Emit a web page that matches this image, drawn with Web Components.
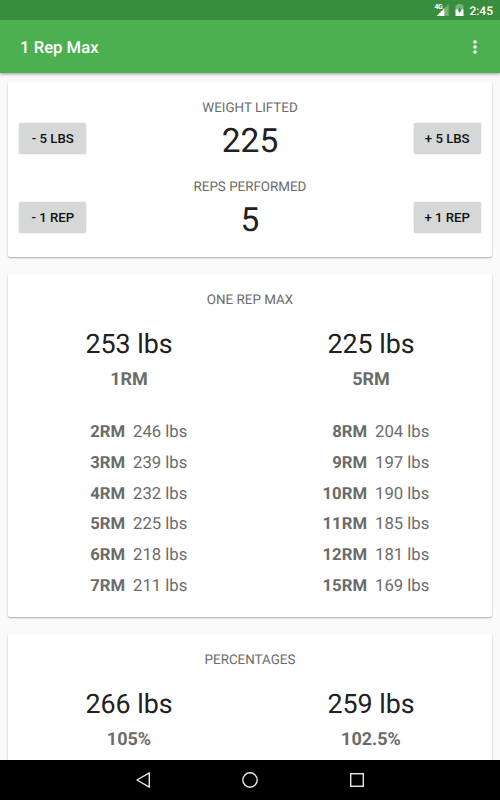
<!DOCTYPE html>
<html lang="en">
<head>
<meta charset="utf-8">
<title>1 Rep Max</title>
<style>
  html, body {
    margin: 0;
    height: 100%;
    overflow: hidden;
  }

  body {
    background: #fafafa;
    font-family: Roboto, "Liberation Sans", sans-serif;
    text-rendering: geometricPrecision;
  }
</style>
</head>
<body>
<rep-app>
  <rep-status-bar slot="top" time="2:45"></rep-status-bar>
  <rep-toolbar slot="top">1 Rep Max</rep-toolbar>
  <rep-card class="inputs">
    <rep-stepper label="WEIGHT LIFTED" minus="- 5 LBS" plus="+ 5 LBS">225</rep-stepper>
    <rep-stepper label="REPS PERFORMED" minus="- 1 REP" plus="+ 1 REP">5</rep-stepper>
  </rep-card>
  <rep-card heading="ONE REP MAX">
    <rep-results
      left="253 lbs|1RM;2RM|246 lbs;3RM|239 lbs;4RM|232 lbs;5RM|225 lbs;6RM|218 lbs;7RM|211 lbs"
      right="225 lbs|5RM;8RM|204 lbs;9RM|197 lbs;10RM|190 lbs;11RM|185 lbs;12RM|181 lbs;15RM|169 lbs"
    ></rep-results>
  </rep-card>
  <rep-card heading="PERCENTAGES">
    <rep-results left="266 lbs|105%" right="259 lbs|102.5%"></rep-results>
  </rep-card>
  <rep-nav-bar slot="bottom"></rep-nav-bar>
</rep-app>

<script>
class RepApp extends HTMLElement {
  constructor() {
    super()
    this.attachShadow({ mode: 'open' }).innerHTML = `
      <style>
        :host {
          display: flex;
          flex-direction: column;
          width: 100%;
          height: 100vh;
        }

        header {
          flex: none;
          box-shadow: 0 1px 3px rgba(0, 0, 0, 0.4);
          z-index: 1;
        }

        main {
          flex: 1;
          min-height: 0;
          overflow: hidden;
          display: flex;
          flex-direction: column;
          gap: 17px;
          padding: 9px 8px 0;
        }
      </style>
      <header><slot name="top"></slot></header>
      <main><slot></slot></main>
      <slot name="bottom"></slot>
    `
  }
}

class RepStatusBar extends HTMLElement {
  connectedCallback() {
    this.attachShadow({ mode: 'open' }).innerHTML = `
      <style>
        :host {
          display: flex;
          justify-content: flex-end;
          height: 20px;
          box-sizing: border-box;
          padding-right: 7px;
          background: #388e3c;
          color: #fff;
        }

        svg {
          display: block;
          margin-right: 5px;
        }

        .signal {
          margin-right: 6px;
        }

        .network {
          font-size: 7px;
          font-weight: 700;
          line-height: 15px;
          letter-spacing: -0.5px;
          margin-right: -6px;
          z-index: 1;
        }

        .time {
          font-size: 12px;
          font-weight: 500;
          line-height: 22px;
        }
      </style>
      <span class="network">4G</span>
      <svg class="signal" width="13" height="20" viewBox="0 0 13 20">
        <path d="M12.7 4v12H0.7z" fill="#fff" opacity="0.3"/>
        <path d="M8.4 8.3V16H0.7z" fill="#fff"/>
      </svg>
      <svg width="9" height="20" viewBox="0 0 9 20">
        <path d="M0.5 5.2h2V4h4v1.2h2V10h-8z" fill="#fff" opacity="0.35"/>
        <path d="M0.5 9.5h8V16h-8z" fill="#fff"/>
        <path d="M5.4 6.6L2.6 11.2h1.6v2.6l2.6-4.4H5.4z" fill="#388e3c"/>
      </svg>
      <span class="time">${this.getAttribute('time')}</span>
    `
  }
}

class RepToolbar extends HTMLElement {
  constructor() {
    super()
    this.attachShadow({ mode: 'open' }).innerHTML = `
      <style>
        :host {
          display: flex;
          align-items: center;
          justify-content: space-between;
          height: 53px;
          box-sizing: border-box;
          padding: 0 23px 0 20px;
          background: #4caf50;
          color: #fff;
          font-size: 16.7px;
          font-weight: 500;
          line-height: 20px;
        }

        .title {
          padding-top: 4px;
        }
      </style>
      <span class="title"><slot></slot></span>
      <svg width="4" height="14" viewBox="0 0 4 14" fill="#fff">
        <circle cx="2" cy="2" r="1.8"/>
        <circle cx="2" cy="7" r="1.8"/>
        <circle cx="2" cy="12" r="1.8"/>
      </svg>
    `
  }
}

class RepCard extends HTMLElement {
  connectedCallback() {
    const heading = this.getAttribute('heading')
    this.attachShadow({ mode: 'open' }).innerHTML = `
      <style>
        :host {
          display: block;
          flex: none;
          box-sizing: border-box;
          background: #fff;
          border-radius: 2px;
          box-shadow: 0 1px 2px rgba(0, 0, 0, 0.32);
          padding: 19px 0 13.6px;
        }

        :host(.inputs) {
          padding: 19px 11.3px 0;
          height: 175px;
        }

        h2 {
          margin: 0;
          color: #6b6b6b;
          font-size: 13.4px;
          font-weight: 400;
          line-height: 16px;
          text-align: center;
        }
      </style>
      ${heading ? `<h2>${heading}</h2>` : ''}
      <slot></slot>
    `
  }
}

class RepStepper extends HTMLElement {
  connectedCallback() {
    this.attachShadow({ mode: 'open' }).innerHTML = `
      <style>
        :host {
          display: grid;
          grid-template-columns: 67px 1fr 67px;
          height: 79.3px;
          text-align: center;
        }

        .label {
          color: #6b6b6b;
          font-size: 13.4px;
          line-height: 16px;
        }

        .value {
          color: #212121;
          font-size: 33.5px;
          line-height: 40px;
          margin-top: 5px;
        }

        button {
          align-self: start;
          height: 31px;
          margin: 22px 0 0;
          padding: 0;
          border: 0;
          border-radius: 2px;
          background: #d6d7d7;
          box-shadow: 0 0 2px rgba(0, 0, 0, 0.2);
          color: #111;
          font: 500 13.2px/31px Roboto, sans-serif;
        }
      </style>
      <button>${this.getAttribute('minus')}</button>
      <div>
        <div class="label">${this.getAttribute('label')}</div>
        <div class="value"><slot></slot></div>
      </div>
      <button>${this.getAttribute('plus')}</button>
    `
  }
}

class RepResults extends HTMLElement {
  connectedCallback() {
    this.attachShadow({ mode: 'open' }).innerHTML = `
      <style>
        :host {
          display: grid;
          grid-template-columns: 1fr 1fr;
          text-align: center;
          color: #6b6b6b;
        }

        .value {
          margin-top: 19px;
          color: #212121;
          font-size: 26.8px;
          line-height: 32px;
        }

        .name {
          margin-top: 9px;
          font-size: 18px;
          font-weight: 700;
          line-height: 22px;
        }

        .rows {
          margin-top: 27px;
        }

        .row {
          display: grid;
          grid-template-columns: 1fr 1fr;
          gap: 8px;
          font-size: 16.7px;
          line-height: 30.8px;
          text-align: left;
        }

        .row b {
          text-align: right;
        }

        .row:last-child {
          margin-bottom: 0.6px;
        }
      </style>
      ${this.createColumnHtml(this.getAttribute('left'))}
      ${this.createColumnHtml(this.getAttribute('right'))}
    `
  }

  // First entry is the headline (value|name), the rest are rows (name|value)
  createColumnHtml(data) {
    const [[value, name], ...rows] = data.split(';').map(d => d.split('|'))
    return `
      <div>
        <div class="value">${value}</div>
        <div class="name">${name}</div>
        <div class="rows">
          ${rows.map(([n, v]) => `<div class="row"><b>${n}</b><span>${v}</span></div>`).join('')}
        </div>
      </div>
    `
  }
}

class RepNavBar extends HTMLElement {
  constructor() {
    super()
    this.attachShadow({ mode: 'open' }).innerHTML = `
      <style>
        :host {
          display: flex;
          flex: none;
          align-items: center;
          justify-content: center;
          gap: 91px;
          height: 40px;
          background: #000;
          z-index: 1;
        }

        svg {
          fill: none;
          stroke: #e8e8e8;
          stroke-width: 1.4;
        }
      </style>
      <svg width="16" height="18" viewBox="0 0 16 18"><path d="M14.3 1.8v14.4L2 9z" stroke-linejoin="round"/></svg>
      <svg width="16" height="16" viewBox="0 0 16 16"><circle cx="8" cy="8" r="7.2"/></svg>
      <svg width="16" height="16" viewBox="0 0 16 16"><rect x="1.7" y="1.7" width="12.6" height="12.6"/></svg>
    `
  }
}

customElements.define('rep-app', RepApp)
customElements.define('rep-status-bar', RepStatusBar)
customElements.define('rep-toolbar', RepToolbar)
customElements.define('rep-card', RepCard)
customElements.define('rep-stepper', RepStepper)
customElements.define('rep-results', RepResults)
customElements.define('rep-nav-bar', RepNavBar)
</script>
</body>
</html>
